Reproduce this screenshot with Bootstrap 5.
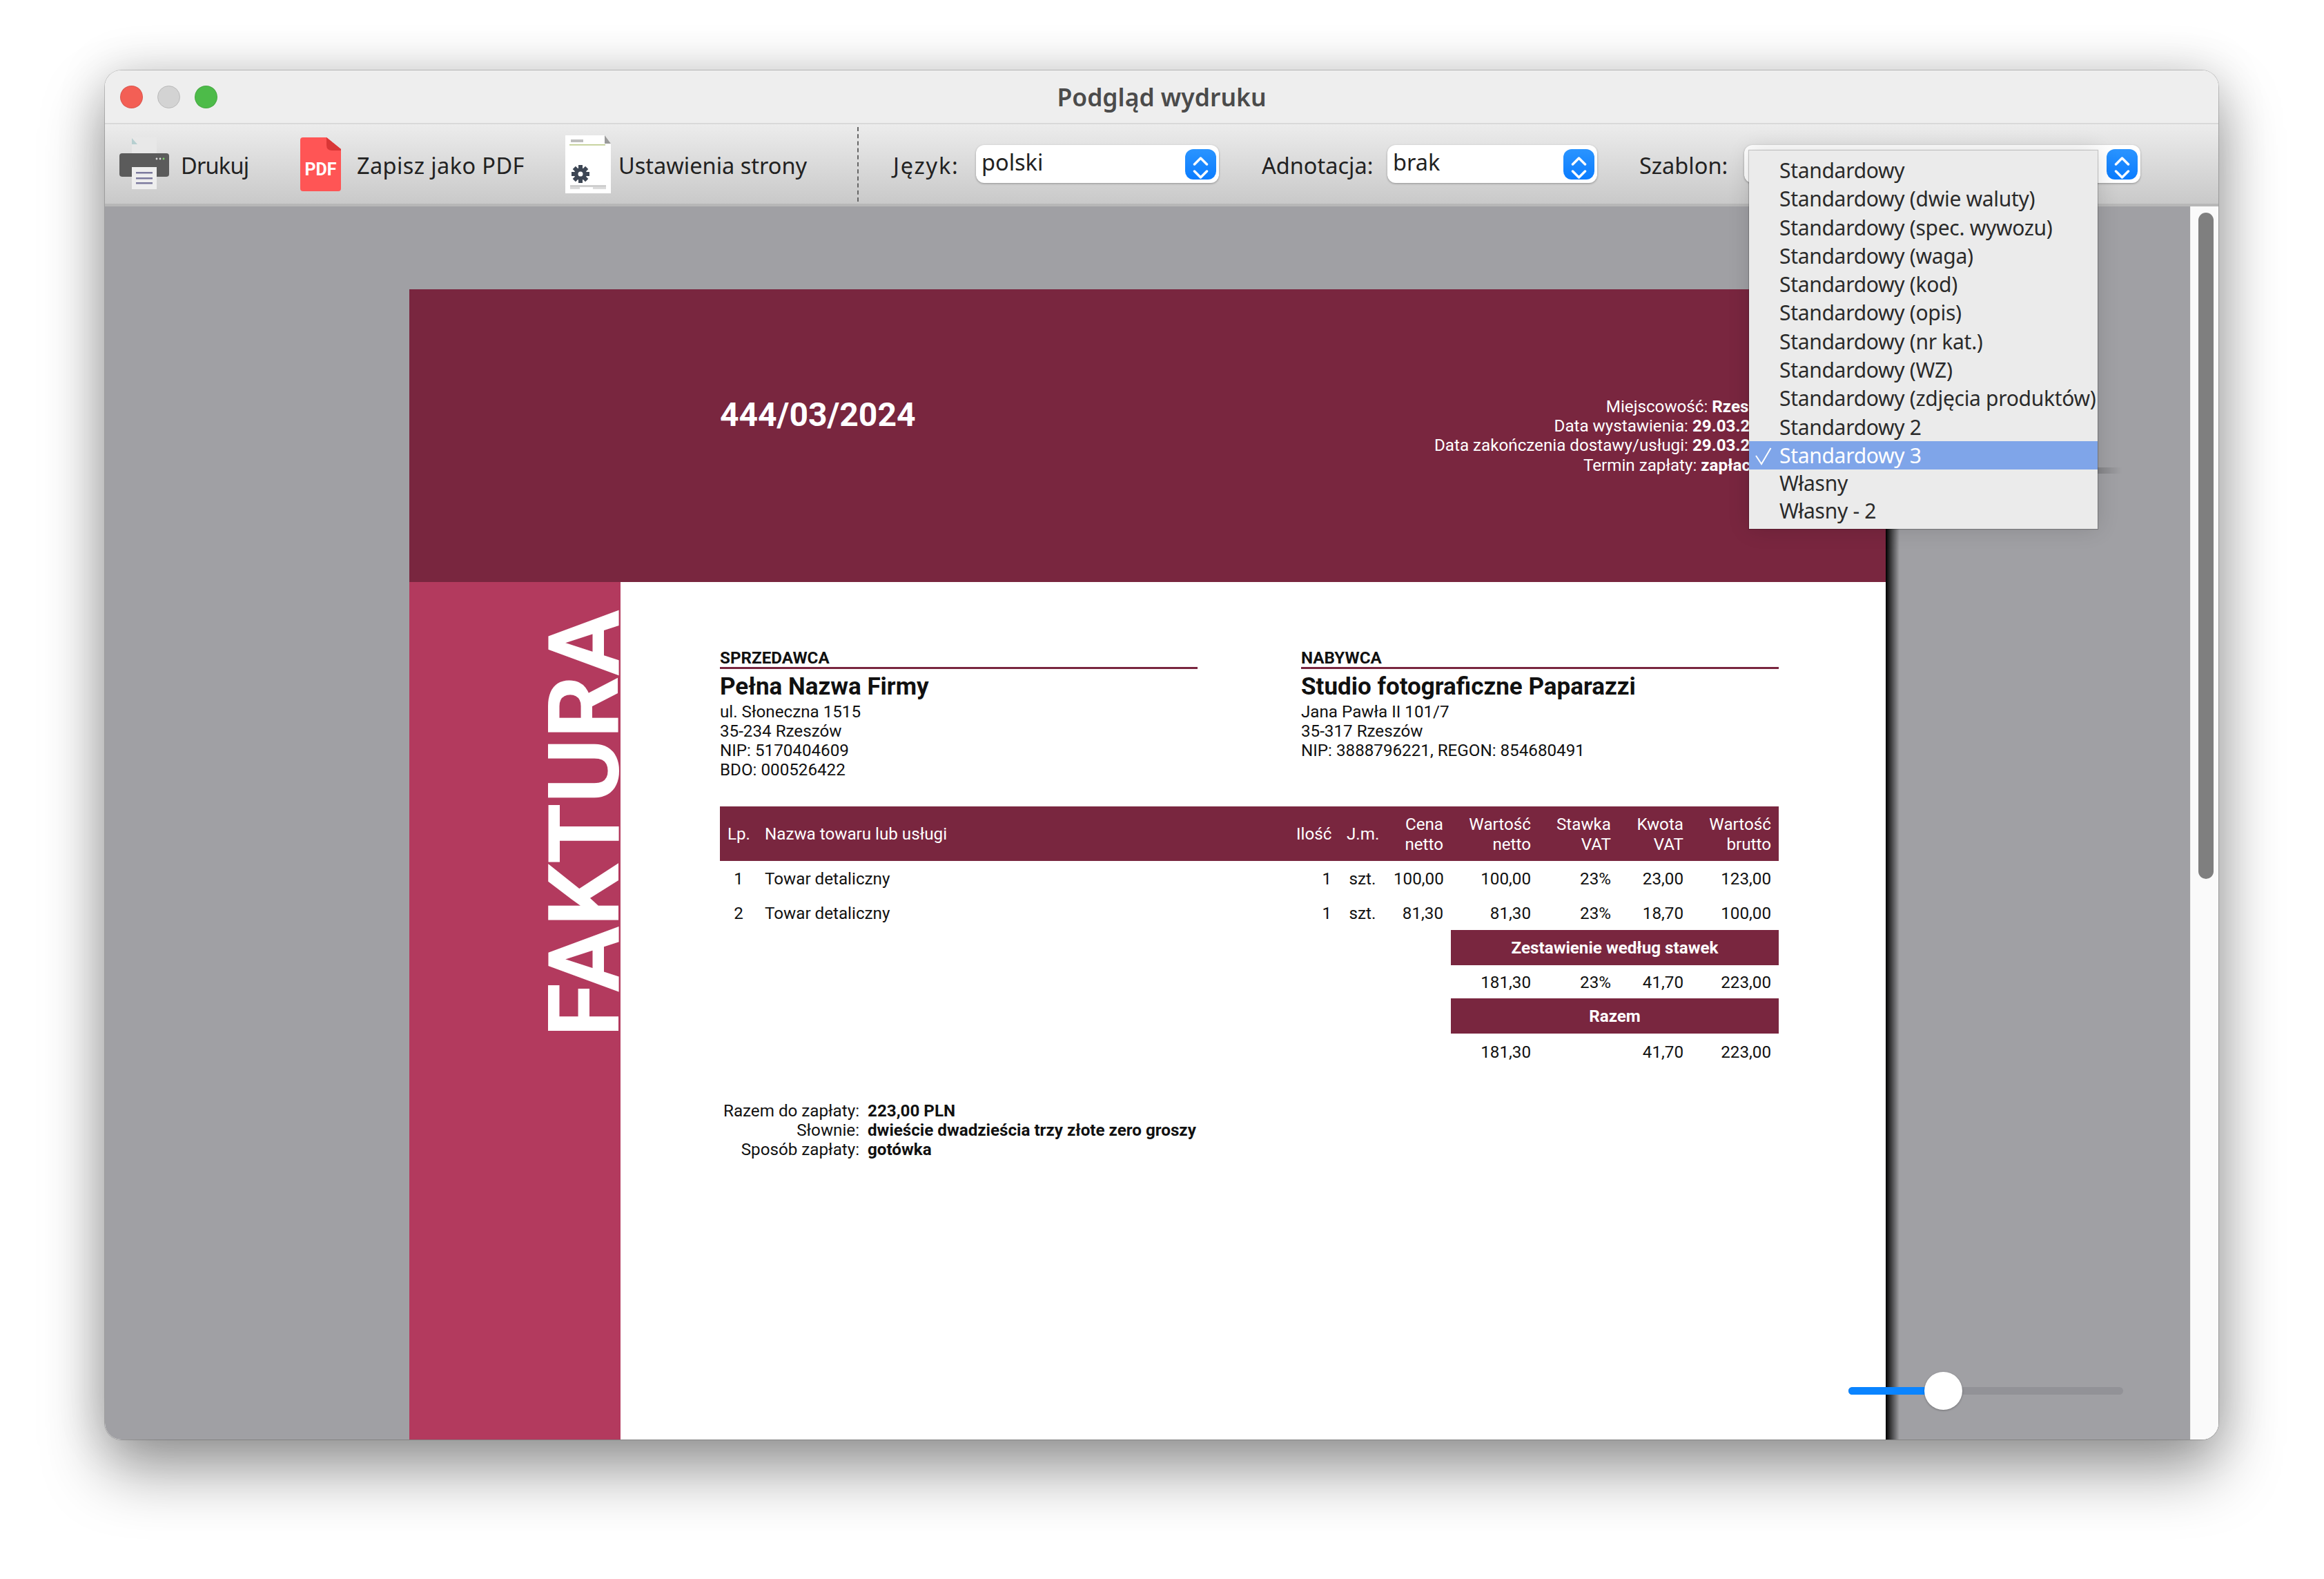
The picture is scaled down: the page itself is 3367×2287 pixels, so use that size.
<!DOCTYPE html>
<html lang="pl">
<head>
  <meta charset="UTF-8" />
  <title>Podgląd wydruku</title>
  <link href="https://cdn.jsdelivr.net/npm/bootstrap@5.3.3/dist/css/bootstrap.min.css" rel="stylesheet" />
  <style>
    html, body { background: #fff; }
    body { width: 3367px; height: 2287px; padding: 102px 0 0 152px; overflow: hidden; font-family: "Noto Sans", sans-serif; }

    /* window */
    .win { position: relative; width: 3062px; height: 1983px; border-radius: 24px; overflow: hidden; background: #fafafa; }
    .win-shadow { width: 3062px; height: 1983px; border-radius: 24px; box-shadow: 0 46px 90px 0 rgba(0,0,0,.38), 0 0 70px rgba(0,0,0,.16), 0 0 0 1px rgba(0,0,0,.18); }
    .titlebar { height: 78px; background: #eeeeee; border-bottom: 2px solid #d9d9d9; padding-left: 22px; position: relative; }
    .dots { gap: 21px; }
    .dot { width: 33px; height: 33px; border-radius: 50%; border: 1px solid rgba(0,0,0,.1); }
    .dot-r { background: #f35f55; }
    .dot-g { background: #d3d3d3; border-color: #b8b8b8; }
    .dot-v { background: #4dbb49; }
    .win-title { width: 100%; text-align: center; position: absolute; left: 0; top: 15px; font: 600 35.5px/46px "Noto Sans", sans-serif; color: #4b4b4b; }
    .toolbar { height: 119px; background: linear-gradient(#ececec, #c9c9c9); border-bottom: 4px solid #b7b7b7; padding-left: 21px; font-size: 32.5px; color: #222; }
    .tool-print { width: 260px; }
    .tool-print .tool-label { letter-spacing: -.8px; }
    .tool-pdf { width: 386px; padding-left: 2px; }
    .tool-pdf .tool-label { letter-spacing: .4px; }
    .tool-doc { width: 423px; }
    .tool-label { white-space: nowrap; margin-top: 6px; }
    .ic-pdf { margin-right: 23px; }
    .ic-doc { margin-right: 11px; }
    .tool-sep { height: 108px; width: 0; border-left: 2px dashed #666; margin-right: 50px; }
    .lbl-lang { width: 120px; letter-spacing: 1.8px; }
    .lbl-note { width: 182px; }
    .lbl-tpl { width: 152px; }
    .sel { height: 55px; background: #fff; border-radius: 12px; box-shadow: 0 1px 3px rgba(0,0,0,.32); padding: 0 4px 0 8px; }
    .sel-text { margin-top: -4px; font-size: 32.5px; color: #222; }
    .stepper { width: 45px; height: 44px; border-radius: 12px; background: linear-gradient(#2a94ff, #0a7cff); }
    .sel-lang { width: 352px; margin-right: 62px; }
    .sel-note { width: 304px; margin-right: 61px; }
    .sel-tpl { width: 574px; }

    /* preview area */
    .stage { height: 1786px; }
    .stage-main { width: 3021px; background: #a0a0a4; padding: 120px 0 0 441px; overflow: hidden; }
    .sheet { width: 2139px; height: 1900px; background: #fff; position: relative; font-family: Roboto, sans-serif; color: #111; }
    .sheet-edge { width: 20px; background: linear-gradient(90deg, #000, #a0a0a4); }
    .sheet-wrap { width: 2159px; height: 1900px; }
    .band { height: 424px; background: #79263f; color: #fff; padding: 154px 155px 0 450px; }
    .inv-no { font: 700 48px/56px Roboto, sans-serif; }
    .inv-meta { font-size: 24.2px; line-height: 28.2px; text-align: right; margin-top: 2px; }
    .side { width: 306px; height: 1476px; background: #b33a5e; }
    .side-word { writing-mode: vertical-rl; transform: rotate(180deg); font: 700 142px/.71 Roboto, sans-serif; color: #fff; margin: 0 0 0 auto; height: 659px; white-space: nowrap; }
    .inv-body { width: 1534px; margin-left: 144px; padding-top: 97px; font-size: 24.2px; line-height: 28.2px; }
    .party { width: 692px; line-height: 28px; }
    .party-label { font-size: 24.2px; font-weight: 700; line-height: 25px; padding-top: 1px; border-bottom: 3px solid #79263f; height: 29px; }
    .party-name { font-size: 35px; font-weight: 700; line-height: 44px; margin-top: 4px; }
    .parties { height: 228px; }
    .inv-table { table-layout: fixed; width: 1534px; margin: 0; font-size: 24.2px; line-height: 28.2px; --bs-table-color: #111; --bs-table-bg: transparent; }
    .inv-table.table > :not(caption) > * > * { padding: 2px 11px 0; vertical-align: middle; border: 0; }
    .inv-table col:nth-child(1) { width: 54px; }
    .inv-table col:nth-child(2) { width: 770px; }
    .inv-table col:nth-child(3) { width: 73px; }
    .inv-table col:nth-child(4) { width: 68px; }
    .inv-table col:nth-child(5) { width: 94px; }
    .inv-table col:nth-child(6), .inv-table col:nth-child(9) { width: 127px; }
    .inv-table col:nth-child(7) { width: 116px; }
    .inv-table col:nth-child(8) { width: 105px; }
    .inv-bar > * { --bs-table-bg: #79263f; --bs-table-color: #fff; color: #fff; font-weight: 400; }
    .inv-bar-b > * { font-weight: 700; text-align: center; }
    .inv-bar > .cell-gap { --bs-table-bg: transparent; }
    .r-head { height: 79px; }
    .r-line { height: 50px; }
    .r-bar { height: 51px; }
    .r-sum { height: 48px; }
    .r-end { height: 52px; }
    .totals { display: grid; grid-template-columns: 202px auto; column-gap: 12px; margin-top: 46px; width: max-content; }
    .totals dt { font-weight: 400; text-align: right; }
    .totals dd { font-weight: 700; margin: 0; }

    .scrollbar { width: 41px; background: #fafafa; border-left: 1px solid #eee; padding: 9px 0 0 11px; }
    .scroll-thumb { width: 22px; height: 965px; border-radius: 11px; background: #7f7f7f; }

    /* overlays */
    .tpl-menu { position: absolute; left: 2382px; top: 116px; width: 505px; height: 548px; background: #ebebeb; box-shadow: 0 0 1px 1px rgba(0,0,0,.2), 0 0 30px rgba(0,0,0,.14); padding-top: 8px; font-size: 30px; letter-spacing: -.3px; line-height: 41.3px; color: #2a2a2a; white-space: nowrap; }
    .tpl-menu::after { content: ""; position: absolute; left: 100%; top: 459px; width: 36px; height: 9px; background: linear-gradient(90deg, rgba(0,0,0,.18), rgba(0,0,0,0)); }
    .tpl-item { padding-left: 44px; position: relative; height: 41.3px; }
    .tpl-item.is-on { background: #7fa5e9; color: #fff; }
    .tpl-item.is-own { height: 39.8px; line-height: 39.8px; }
    .tpl-check { position: absolute; left: 9px; top: 9px; }
    .zoom-slider { position: absolute; left: 2526px; top: 1885px; width: 398px; height: 55px; }
    .zoom-track { position: absolute; left: 0; right: 0; top: 22px; height: 11px; border-radius: 6px; background: #929297; }
    .zoom-fill { position: absolute; left: 0; top: 22px; height: 11px; border-radius: 6px 0 0 6px; background: #0a84ff; }
    .zoom-thumb { position: absolute; left: 110px; top: 0; width: 55px; height: 55px; border-radius: 50%; background: #fff; box-shadow: 0 1px 3px rgba(0,0,0,.3); }
  </style>
</head>
<body>
  <div class="win-shadow">
  <div class="win">

    <div class="titlebar d-flex align-items-center">
      <div class="dots d-flex">
        <div class="dot dot-r"></div>
        <div class="dot dot-g"></div>
        <div class="dot dot-v"></div>
      </div>
      <div class="win-title">Podgląd wydruku</div>
    </div>

    <div class="toolbar d-flex align-items-center">
      <div class="tool-print d-flex align-items-center flex-shrink-0">
        <svg width="73" height="78" viewBox="0 0 73 78" class="me-3 flex-shrink-0">
          <rect x="18" y="0" width="36" height="25" fill="#e8e8e8"/>
          <path d="M18 0v9h8z" transform="translate(0 1)" fill="#b6cfd0"/>
          <rect x="0" y="23" width="72" height="34" rx="4" fill="#5b5b5b"/>
          <circle cx="54" cy="31" r="1.4" fill="#ddd"/><circle cx="59" cy="31" r="1.4" fill="#ddd"/><circle cx="64" cy="31" r="1.4" fill="#7ed36b"/>
          <rect x="18" y="43" width="36" height="32" fill="#eeeeee"/>
          <rect x="24" y="50" width="24" height="2.5" fill="#7c7a9e"/><rect x="24" y="58" width="24" height="2.5" fill="#7c7a9e"/><rect x="24" y="65" width="24" height="2.5" fill="#7c7a9e"/>
        </svg>
        <span class="tool-label">Drukuj</span>
      </div>
      <div class="tool-pdf d-flex align-items-center flex-shrink-0">
        <svg width="59" height="78" viewBox="0 0 59 78" class="ic-pdf flex-shrink-0">
          <path d="M4 0H38L59 17V74a4 4 0 0 1-4 4H4a4 4 0 0 1-4-4V4a4 4 0 0 1 4-4z" fill="#ff5555"/>
          <path d="M38 0L59 17V19H46Q38 19 38 11z" fill="#d93636"/>
          <text x="29.5" y="55" text-anchor="middle" font-family="Roboto, sans-serif" font-weight="700" font-size="25" fill="#fff">PDF</text>
        </svg>
        <span class="tool-label">Zapisz jako PDF</span>
      </div>
      <div class="tool-doc d-flex align-items-center flex-shrink-0">
        <svg width="66" height="84" viewBox="0 0 66 84" class="ic-doc flex-shrink-0">
          <path d="M0 0H57L66 12V84H0z" fill="#fff"/>
          <path d="M57 0L66 12H57z" fill="#9a9a9a"/>
          <rect x="8" y="6" width="18" height="4" fill="#bdbdbd"/>
          <rect x="6" y="13" width="52" height="1.6" fill="#bcc98a"/>
          <g transform="translate(22 56)" fill="#3d4654">
            <circle r="9"/>
            <rect x="-3" y="-13" width="6" height="26"/>
            <rect x="-3" y="-13" width="6" height="26" transform="rotate(45)"/>
            <rect x="-3" y="-13" width="6" height="26" transform="rotate(90)"/>
            <rect x="-3" y="-13" width="6" height="26" transform="rotate(135)"/>
            <circle r="3.5" fill="#fff"/>
          </g>
          <rect x="7" y="72" width="52" height="3" fill="#cfcfcf"/>
          <rect x="7" y="75" width="14" height="3" fill="#dcdcdc"/><rect x="40" y="75" width="19" height="3" fill="#dcdcdc"/>
        </svg>
        <span class="tool-label">Ustawienia strony</span>
      </div>
      <div class="tool-sep flex-shrink-0"></div>

      <span class="tool-label lbl-lang flex-shrink-0">Język:</span>
      <div class="sel sel-lang d-flex align-items-center justify-content-between flex-shrink-0">
        <span class="sel-text">polski</span>
        <span class="stepper d-block flex-shrink-0"><svg width="45" height="44" viewBox="0 0 44 44" fill="none" stroke="#fff" stroke-width="3.5" stroke-linecap="round" stroke-linejoin="round"><path d="M13 17l9-9 9 9M13 27l9 9 9-9"/></svg></span>
      </div>
      <span class="tool-label lbl-note flex-shrink-0">Adnotacja:</span>
      <div class="sel sel-note d-flex align-items-center justify-content-between flex-shrink-0">
        <span class="sel-text">brak</span>
        <span class="stepper d-block flex-shrink-0"><svg width="45" height="44" viewBox="0 0 44 44" fill="none" stroke="#fff" stroke-width="3.5" stroke-linecap="round" stroke-linejoin="round"><path d="M13 17l9-9 9 9M13 27l9 9 9-9"/></svg></span>
      </div>
      <span class="tool-label lbl-tpl flex-shrink-0">Szablon:</span>
      <div class="sel sel-tpl d-flex align-items-center justify-content-end flex-shrink-0">
        <span class="stepper d-block flex-shrink-0"><svg width="45" height="44" viewBox="0 0 44 44" fill="none" stroke="#fff" stroke-width="3.5" stroke-linecap="round" stroke-linejoin="round"><path d="M13 17l9-9 9 9M13 27l9 9 9-9"/></svg></span>
      </div>
    </div>

    <div class="stage d-flex">
      <div class="stage-main">
        <div class="sheet-wrap d-flex">
          <div class="sheet">
            <div class="band d-flex justify-content-between">
              <div class="inv-no">444/03/2024</div>
              <div class="inv-meta">
                <div>Miejscowość: <b>Rzeszów</b></div>
                <div>Data wystawienia: <b>29.03.2024</b></div>
                <div>Data zakończenia dostawy/usługi: <b>29.03.2024</b></div>
                <div>Termin zapłaty: <b>zapłacono</b></div>
              </div>
            </div>
            <div class="d-flex">
              <div class="side d-flex"><div class="side-word">FAKTURA</div></div>
              <div class="inv-body">
                <div class="parties d-flex justify-content-between">
                  <div class="party">
                    <div class="party-label">SPRZEDAWCA</div>
                    <div class="party-name">Pełna Nazwa Firmy</div>
                    <div>ul. Słoneczna 1515</div>
                    <div>35-234 Rzeszów</div>
                    <div>NIP: 5170404609</div>
                    <div>BDO: 000526422</div>
                  </div>
                  <div class="party">
                    <div class="party-label">NABYWCA</div>
                    <div class="party-name">Studio fotograficzne Paparazzi</div>
                    <div>Jana Pawła II 101/7</div>
                    <div>35-317 Rzeszów</div>
                    <div>NIP: 3888796221, REGON: 854680491</div>
                  </div>
                </div>
                <table class="table table-borderless inv-table">
                  <colgroup><col><col><col><col><col><col><col><col><col></colgroup>
                  <tbody id="invRows"></tbody>
                </table>
                <dl class="totals">
                  <dt>Razem do zapłaty:</dt><dd>223,00 PLN</dd>
                  <dt>Słownie:</dt><dd>dwieście dwadzieścia trzy złote zero groszy</dd>
                  <dt>Sposób zapłaty:</dt><dd>gotówka</dd>
                </dl>
              </div>
            </div>
          </div>
          <div class="sheet-edge flex-shrink-0"></div>
        </div>
      </div>
      <div class="scrollbar flex-shrink-0"><div class="scroll-thumb"></div></div>
    </div>

    <div class="tpl-menu" id="tplMenu"></div>

    <div class="zoom-slider">
      <div class="zoom-track"></div>
      <div class="zoom-fill" style="width:120px"></div>
      <div class="zoom-thumb"></div>
    </div>
  </div>
  </div>

  <script src="https://cdn.jsdelivr.net/npm/bootstrap@5.3.3/dist/js/bootstrap.bundle.min.js"></script>
  <script>
    const templates = ["Standardowy", "Standardowy (dwie waluty)", "Standardowy (spec. wywozu)", "Standardowy (waga)",
      "Standardowy (kod)", "Standardowy (opis)", "Standardowy (nr kat.)", "Standardowy (WZ)",
      "Standardowy (zdjęcia produktów)", "Standardowy 2", "Standardowy 3", "Własny", "Własny - 2"];
    const check = '<svg class="tpl-check" width="24" height="26" viewBox="0 0 24 26" fill="none" stroke="#fff" stroke-width="2"><path d="M1 12l8 12L22.5 1"/></svg>';
    document.getElementById('tplMenu').innerHTML = templates.map(t => {
      const on = t === 'Standardowy 3';
      const own = t.startsWith('Własny');
      return `<div class="tpl-item ${on ? 'is-on' : ''} ${own ? 'is-own' : ''}">${on ? check : ''}${t}</div>`;
    }).join('');

    const lines = [
      ['1', 'Towar detaliczny', '1', 'szt.', '100,00', '100,00', '23%', '23,00', '123,00'],
      ['2', 'Towar detaliczny', '1', 'szt.', '81,30', '81,30', '23%', '18,70', '100,00']
    ];
    const right = 'text-end';
    let rows = `<tr class="inv-bar r-head">
      <th>Lp.</th><th>Nazwa towaru lub usługi</th><th class="${right}">Ilość</th><th class="text-center">J.m.</th>
      <th class="${right}">Cena<br>netto</th><th class="${right}">Wartość<br>netto</th><th class="${right}">Stawka<br>VAT</th>
      <th class="${right}">Kwota<br>VAT</th><th class="${right}">Wartość<br>brutto</th></tr>`;
    lines.forEach(l => {
      rows += `<tr class="r-line"><td class="text-center">${l[0]}</td><td>${l[1]}</td><td class="${right}">${l[2]}</td><td class="text-center">${l[3]}</td>` +
        l.slice(4).map(v => `<td class="${right}">${v}</td>`).join('') + '</tr>';
    });
    rows += `<tr class="inv-bar-b inv-bar r-bar"><td colspan="5" class="cell-gap"></td><td colspan="4">Zestawienie według stawek</td></tr>`;
    rows += `<tr class="r-sum"><td colspan="5"></td><td class="${right}">181,30</td><td class="${right}">23%</td><td class="${right}">41,70</td><td class="${right}">223,00</td></tr>`;
    rows += `<tr class="inv-bar-b inv-bar r-bar"><td colspan="5" class="cell-gap"></td><td colspan="4">Razem</td></tr>`;
    rows += `<tr class="r-end"><td colspan="5"></td><td class="${right}">181,30</td><td></td><td class="${right}">41,70</td><td class="${right}">223,00</td></tr>`;
    document.getElementById('invRows').innerHTML = rows;
  </script>
</body>
</html>
